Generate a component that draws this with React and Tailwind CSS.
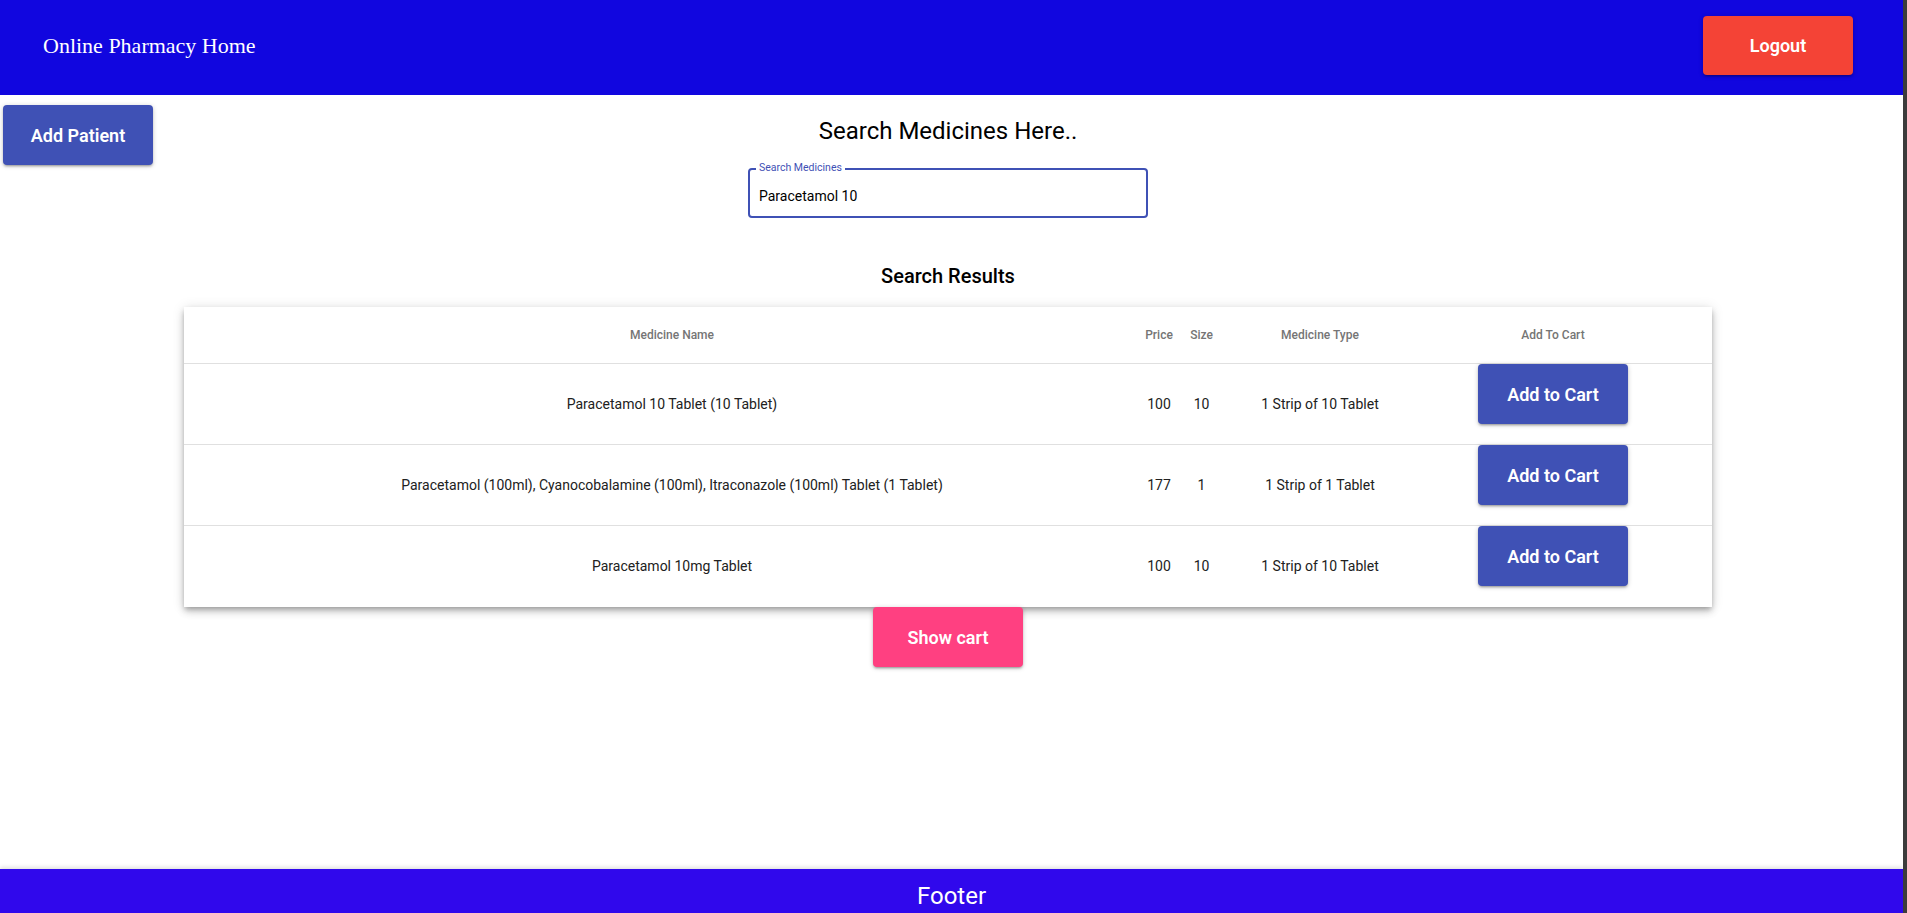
import React from "react";

const medicines = [
  { name: "Paracetamol 10 Tablet (10 Tablet)", price: 100, size: 10, type: "1 Strip of 10 Tablet" },
  {
    name: "Paracetamol (100ml), Cyanocobalamine (100ml), Itraconazole (100ml) Tablet (1 Tablet)",
    price: 177,
    size: 1,
    type: "1 Strip of 1 Tablet",
  },
  { name: "Paracetamol 10mg Tablet", price: 100, size: 10, type: "1 Strip of 10 Tablet" },
];

const btnShadow =
  "shadow-[0_1px_5px_0_rgba(0,0,0,0.2),0_2px_2px_0_rgba(0,0,0,0.14),0_3px_1px_-2px_rgba(0,0,0,0.12)]";

const cols = "grid grid-cols-[954px_42px_43px_194px_295px]";

const App = () => {
  return (
    <div className="flex min-h-screen font-['Roboto',sans-serif]">
      <div className="flex flex-1 flex-col">
        <header className="flex h-[95px] items-center justify-between bg-[#1106df] pb-[5px] pl-[43px] pr-[50px]">
          <h1 className="font-['Liberation_Serif',serif] text-[22px] text-white">Online Pharmacy Home</h1>
          <button className={`h-[59px] w-[150px] rounded bg-[#f44336] text-[18px] font-semibold text-white ${btnShadow}`}>
            Logout
          </button>
        </header>

        <main className="flex-1 pr-[7px]">
          <div className="grid grid-cols-[1fr_auto_1fr]">
            <div className="pl-[3px] pt-[10px]">
              <button className={`h-[60px] w-[150px] rounded bg-[#3f51b5] text-[18px] font-semibold text-white ${btnShadow}`}>
                Add Patient
              </button>
            </div>
            <div className="flex flex-col items-center pt-[20px]">
              <h2 className="text-[24px] leading-[32px] text-black">Search Medicines Here..</h2>
              <div className="relative mt-[21px] h-[50px] w-[400px] rounded border-2 border-[#3f51b5]">
                <span className="absolute -top-[7px] left-[6px] bg-white px-[3px] text-[10.5px] leading-none text-[#3f51b5]">
                  Search Medicines
                </span>
                <input
                  value="Paracetamol 10"
                  readOnly
                  className="h-full w-full bg-transparent pl-[9px] pt-[6px] text-[14px] text-black outline-none"
                />
              </div>
            </div>
            <div />
          </div>

          <h3 className="mt-[44px] text-center text-[20px] font-medium leading-[28px] text-black">Search Results</h3>

          <div className="mx-auto mt-[17px] w-[1528px] bg-white shadow-[0_3px_5px_-1px_rgba(0,0,0,0.25),0_5px_8px_0_rgba(0,0,0,0.14),0_1px_12px_0_rgba(0,0,0,0.12)]">
            <div className={`${cols} h-[57px] border-b border-[#e0e0e0] text-[12px] font-medium text-[#757575]`}>
              <div className="flex items-center justify-center pl-[22px]">Medicine Name</div>
              <div className="flex items-center justify-center">Price</div>
              <div className="flex items-center justify-center">Size</div>
              <div className="flex items-center justify-center">Medicine Type</div>
              <div className="flex items-center justify-center pr-[23px]">Add To Cart</div>
            </div>
            {medicines.map((m, i) => (
              <div
                key={i}
                className={`${cols} h-[81px] text-[14px] text-[#212121] ${i < medicines.length - 1 ? "border-b border-[#e0e0e0]" : ""}`}
              >
                <div className="flex items-center justify-center whitespace-nowrap pl-[22px]">{m.name}</div>
                <div className="flex items-center justify-center">{m.price}</div>
                <div className="flex items-center justify-center">{m.size}</div>
                <div className="flex items-center justify-center whitespace-nowrap">{m.type}</div>
                <div className="flex items-start justify-center pr-[23px]">
                  <button className={`h-[60px] w-[150px] rounded bg-[#3f51b5] text-[18px] font-semibold text-white ${btnShadow}`}>
                    Add to Cart
                  </button>
                </div>
              </div>
            ))}
          </div>

          <button
            className={`mx-auto block h-[60px] w-[150px] rounded bg-[#ff4081] text-[18px] font-semibold text-white ${btnShadow}`}
          >
            Show cart
          </button>
        </main>

        <footer className="h-[44px] overflow-hidden bg-[#3008ec] pt-[9px] text-center text-[24px] leading-[36px] text-white shadow-[0_-2px_4px_rgba(0,0,0,0.12)]">
          Footer
        </footer>
      </div>
      <div className="w-[4px] bg-[#3c3c3c]" />
    </div>
  );
};

export default App;
